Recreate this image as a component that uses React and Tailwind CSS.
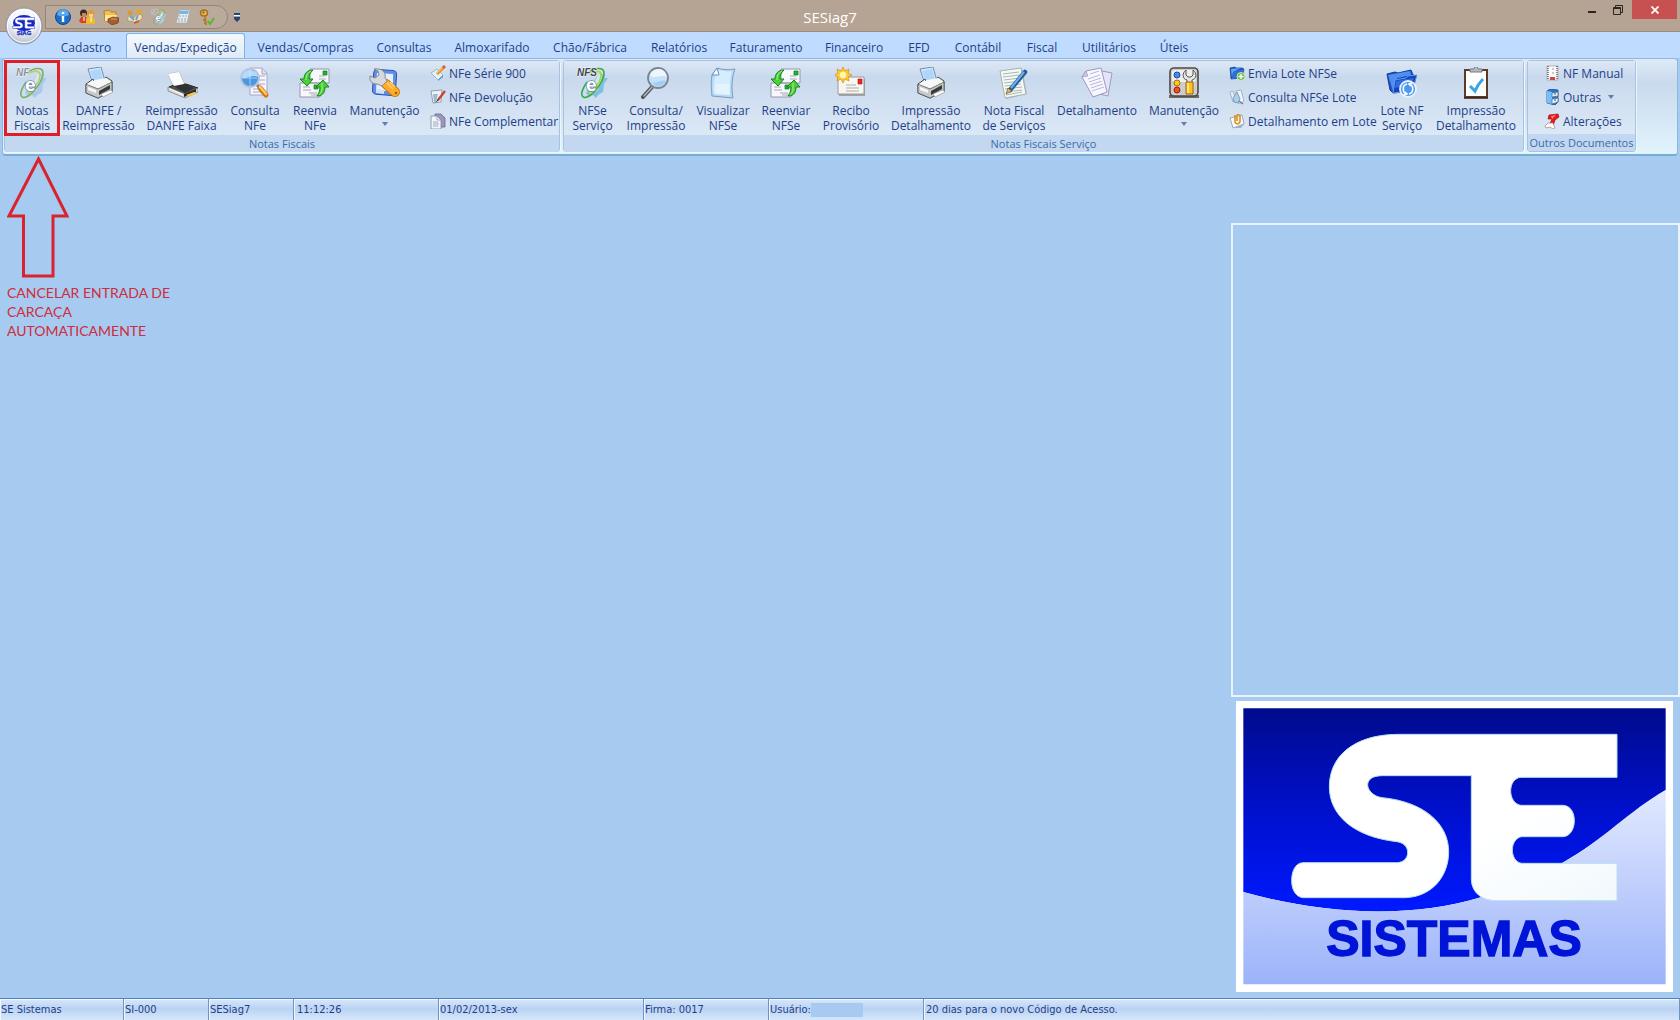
import React, { useState } from "react";

const tabs = [
  { name: "Cadastro", width: "w-20" },
  { name: "Vendas/Expedição", width: "w-[119px]" },
  { name: "Vendas/Compras", width: "w-[121px]" },
  { name: "Consultas", width: "w-[76px]" },
  { name: "Almoxarifado", width: "w-[100px]" },
  { name: "Chão/Fábrica", width: "w-24" },
  { name: "Relatórios", width: "w-[82px]" },
  { name: "Faturamento", width: "w-[92px]" },
  { name: "Financeiro", width: "w-[84px]" },
  { name: "EFD", width: "w-[46px]" },
  { name: "Contábil", width: "w-[72px]" },
  { name: "Fiscal", width: "w-14" },
  { name: "Utilitários", width: "w-[78px]" },
  { name: "Úteis", width: "w-[52px]" },
];

const SE_MARK =
  "M1191 133H530C400 135 328 200 328 290C328 375 400 440 530 455C550 457 563 470 563 487C563 505 550 518 530 518H248C225 520 215 545 215 572C215 600 228 620 248 623H555C640 620 686 555 686 485C686 400 610 335 487 323C460 320 443 300 443 285C443 268 458 257 487 257H754V570C756 608 785 632 830 632H1191V520H905C888 518 877 500 877 480C877 460 888 442 905 440H1030C1052 438 1063 415 1063 392C1063 368 1052 348 1030 346H903C885 344 872 325 872 303C872 280 885 263 903 262H1191Z";

/* ---------- large icons (32x32) ---------- */

const Svg = ({ children, size = 32, className = "size-8" }) => (
  <svg viewBox={`0 0 ${size} ${size}`} className={className} aria-hidden="true">
    {children}
  </svg>
);

const NfeIcon = ({ label = "NF", dark = false, className }) => (
  <Svg className={className}>
    <path d="M22 6l6 2-1 3 4 0-4 6-1 8-5 3-2 3-3-3-4 2-3-4 6-9z" fill={dark ? "#7fc0e0" : "#a9c9ec"} />
    <path d="M22 6l3 3-1 5-3 9-6 4-3-1z" fill={dark ? "#c9eaf0" : "#d8e8f7"} />
    <path d="M11 6C18 0 27 0 27 6c0 7-8 19-15 23-5 3-8 1-7-4 1-4 3-7 5-10" fill="none" stroke={dark ? "#35ad4c" : "#79b070"} strokeWidth="1.6" />
    <path d="M12 7c5-4 12-4 12 1 0 6-6 15-12 19" fill="none" stroke={dark ? "#b5d52f" : "#b9d061"} strokeWidth="1.6" />
    <text x="9" y="24" fontSize="19" fontWeight="700" fontFamily="Liberation Sans, sans-serif" fill="#fff" stroke="#6a8aa2" strokeWidth="1.5" paintOrder="stroke">e</text>
    <text x="0" y="9" fontSize="10" fontWeight="700" fontFamily="Liberation Sans, sans-serif" fontStyle="italic" fill={dark ? "#3f474c" : "#8a949c"} stroke="#f4f7fa" strokeWidth="1" paintOrder="stroke">{label}</text>
  </Svg>
);

const PrinterIcon = () => (
  <Svg>
    <path d="M5 2l13-2 4 14-12 3z" fill="#d4eafd" stroke="#6e8fb7" />
    <path d="M7 4l10-2 3 10-9 3z" fill="#9fccf5" opacity=".7" />
    <path d="M3 17l7-5 1 3 11-3 1-2 6 4v10l-14 7-12-5z" fill="#e8e9ea" stroke="#4a4a4a" />
    <path d="M3 17l12 5 14-7v9l-14 7-12-5z" fill="#c6c8c9" stroke="#555" strokeWidth=".8" />
    <path d="M4 17l8-4 11-2 5 4-13 6z" fill="#f7f7f7" />
    <path d="M16 24l11-6v4l-11 6z" fill="#37393b" />
    <path d="M18 27l10-4 2 2-10 5z" fill="#fff" stroke="#888" strokeWidth=".6" />
    <path d="M5 20l8 3v3l-8-3z" fill="#f5f5f5" />
    <circle cx="25" cy="17" r="1" fill="#8ac44a" />
  </Svg>
);

const FlatPrinterIcon = () => (
  <Svg>
    <path d="M2 7l11-2 6 13-11 3z" fill="#fff" stroke="#b8babd" />
    <path d="M3 20l5-2 12-1 12 4-13 7z" fill="#4c4e50" stroke="#252525" />
    <path d="M8 19l11-2 9 4-9 5z" fill="#2f3133" />
    <path d="M2 7l11-2 5 12-10 2z" fill="#fbfcfd" />
    <path d="M2 20l17 7 13-6v4l-13 6-17-7z" fill="#d4d4d3" stroke="#777" strokeWidth=".7" />
    <path d="M18 27l12-5v3l-12 5z" fill="#28292a" />
    <path d="M20 28l8-3 3 1-8 4z" fill="#f4c552" />
    <path d="M3 21l14 6v2l-14-7z" fill="#f6f6f5" />
  </Svg>
);

const SearchDocIcon = () => (
  <Svg>
    <path d="M11 1h12l5 5v22H11z" fill="#f5f5fb" stroke="#a5a6c6" />
    <path d="M23 1v6h5" fill="#dedff0" stroke="#a5a6c6" />
    <path d="M20 9h6M20 13h6M19 17h7M14 22h7M14 25h8" stroke="#a5a7cb" />
    <circle cx="11" cy="11" r="9" fill="#4b98e0" stroke="#b6c5db" strokeWidth="2" />
    <path d="M3 11c0-6 4-8 8-8 4 0 8 3 8 7-6-3-10 2-16 1z" fill="#b4d9fa" />
    <path d="M11 3v16M4 11h14" stroke="#dceeff" strokeWidth=".6" />
    <path d="M18 18l3 3" stroke="#7c8494" strokeWidth="3" />
    <path d="M21 21l6 7" stroke="#cf7418" strokeWidth="5" strokeLinecap="round" />
    <path d="M21 20l6 7" stroke="#ffcc61" strokeWidth="2.5" strokeLinecap="round" />
  </Svg>
);

const ResendIcon = () => (
  <Svg>
    <path d="M11 2h19v14H11zM1 16h20v14H1z" fill="#f7f7fc" stroke="#9796b0" />
    <path d="M24 4h4v4h-4zM15 18h4v4h-4z" fill="#15bd21" stroke="#0c7920" strokeWidth=".7" />
    <path d="M20 9h6M20 12h7M4 20h7M4 23h8M10 26h8M12 28h6" stroke="#a7a6bd" />
    <path d="M14 3C8 3 5 7 5 12H1l7 7 6-7h-4c0-4 1-6 4-9z" fill="#49d13a" stroke="#18851b" />
    <path d="M12 4c-4 2-5 5-5 9" stroke="#a9f08f" fill="none" />
    <path d="M18 29c6 0 8-4 8-9h4l-6-7-7 7h4c0 4-1 6-3 9z" fill="#49d13a" stroke="#18851b" />
    <path d="M23 16v7c-1 3-2 4-3 5" stroke="#a9f08f" fill="none" />
  </Svg>
);

const ToolsIcon = () => (
  <Svg>
    <rect x="4" y="3" width="23" height="25" rx="4" transform="rotate(4 17 16)" fill="#5f8fe6" stroke="#2c52ae" />
    <path d="M8 6l16 1 0 17-17 0z" fill="#e6effb" />
    <path d="M7 22l8 1v4l-8-1z" fill="#cfdff8" />
    <path d="M17 17l9 8" stroke="#c57710" strokeWidth="10" strokeLinecap="round" />
    <path d="M17 17l9 8" stroke="#ffac24" strokeWidth="8" strokeLinecap="round" />
    <path d="M5 2l4 2 1 4-4 3-5-2c-1 5 2 8 7 8l5 2 5-5-2-4c1-5-3-9-11-8z" fill="#d5d8dd" stroke="#868b94" />
    <path d="M18 16l6 6M21 15l5 5" stroke="#ffd57c" strokeWidth="1.4" />
    <circle cx="27" cy="26" r="1.3" fill="#a85f0a" />
  </Svg>
);

const MagnifierIcon = () => (
  <Svg>
    <path d="M12 20L3 30" stroke="#4f5256" strokeWidth="4" strokeLinecap="round" />
    <path d="M12 20l-8 9" stroke="#b4b8bc" strokeWidth="1.5" strokeLinecap="round" />
    <circle cx="18" cy="11" r="10" fill="#c7e1fa" stroke="#7d8690" strokeWidth="1.8" />
    <path d="M10 9c1-5 5-7 9-7s7 3 8 8c-7-3-10 2-17-1z" fill="#ecf6ff" />
    <path d="M12 15c5 2 9-3 14-1-2 5-11 8-14 1z" fill="#a3cdf7" />
  </Svg>
);

const PageIcon = () => (
  <Svg>
    <path d="M10 1c6 2 12 2 18 1-3 8-4 18-2 29L5 29C4 20 4 13 5 8z" fill="#b5daf8" stroke="#7f9bc0" />
    <path d="M12 3c4 1 9 2 13 1-2 8-3 16-2 24L7 27c-1-7 0-12 1-17z" fill="#d6edfd" />
    <path d="M9 17h14l0 11-15-1z" fill="#eaf6ff" opacity=".7" />
    <path d="M10 1l2 7-7 0z" fill="#f4faff" stroke="#6c8fbe" />
  </Svg>
);

const ReceiptIcon = () => (
  <Svg>
    <path d="M4 12h26v17H4z" fill="#7b7b7b" opacity=".6" />
    <path d="M3 10h26v17H3z" fill="#f8f6f2" stroke="#9d9a94" />
    <path d="M23 12h4v5h-4z" fill="#e8252b" stroke="#a61619" strokeWidth=".6" />
    <path d="M11 18h10M11 21h13M11 24h13" stroke="#b0aca5" />
    <path d="M8 0l2 4 4-2-1 4 4 2-4 2 1 4-4-2-2 4-2-4-4 2 1-4-4-2 4-2-1-4 4 2z" fill="#ffcb2e" stroke="#d98a12" strokeWidth=".7" />
    <circle cx="8" cy="8" r="3.2" fill="#fff8b5" />
  </Svg>
);

const NotePenIcon = () => (
  <Svg>
    <path d="M3 5l21-4 5 26-21 5z" fill="#8e9491" opacity=".5" />
    <path d="M2 4l21-3 5 26-21 4z" fill="#f6f8f3" stroke="#a9b1b1" />
    <path d="M5 7l16-2M5 10l17-2M6 13l16-2M6 16l17-2M7 19l16-2M7 22l17-2M8 25l16-2M8 28l16-3" stroke="#a3b8b9" />
    <path d="M27 5L12 23" stroke="#265a9c" strokeWidth="4.5" strokeLinecap="round" />
    <path d="M26 5L13 21" stroke="#6fb2ec" strokeWidth="2" />
    <path d="M10 21l4 3-6 3z" fill="#f0b352" stroke="#5c4524" strokeWidth=".6" />
  </Svg>
);

const PapersIcon = () => (
  <Svg>
    <path d="M16 3l15 3-4 23-13-3z" fill="#e5e4f6" stroke="#9e9dc0" />
    <path d="M1 10l4-6 15-3 6 24-14 5z" fill="#f8f7ff" stroke="#9a99bd" />
    <path d="M1 10l6-1-2-5z" fill="#cac8e8" stroke="#9a99bd" strokeWidth=".7" />
    <path d="M9 7l9-3M7 12l12-4M8 15l12-4M9 18l12-4M10 21l12-4M11 24l12-4" stroke="#b9b7d8" />
  </Svg>
);

const PanelIcon = () => (
  <Svg>
    <path d="M1 28h30v3H1z" fill="#6c6864" />
    <rect x="2" y="1" width="28" height="28" rx="4" fill="#cfcdca" stroke="#4d4a47" strokeWidth="1.6" />
    <rect x="4" y="3" width="24" height="12" rx="3" fill="#efeeec" />
    <circle cx="9" cy="8" r="3" fill="#3f8cee" stroke="#1c4d9d" />
    <circle cx="9" cy="16" r="3" fill="#ffc61e" stroke="#a56e10" />
    <circle cx="9" cy="23" r="3" fill="#f04d22" stroke="#991d11" />
    <path d="M18 3c-4 3-4 9 1 10v3h5v-3c5-1 5-7 1-10v5l-2 2h-3l-2-2z" fill="#e3e5e7" stroke="#515457" />
    <path d="M18 15h7v12h-7z" fill="#ffc11e" stroke="#a26510" />
    <path d="M20 16v10" stroke="#fff0a0" strokeWidth="1.5" />
  </Svg>
);

const FolderSyncIcon = () => (
  <Svg>
    <path d="M1 7l8-2 3 1 13-3 2 5 3 1-3 15-20 2-3-3z" fill="#1c52c4" stroke="#123a93" />
    <path d="M2 8l22-4 1 4-14 3-4 13z" fill="#4f8ff0" />
    <path d="M9 13l11-2 2-2 9-1-5 16-19 2z" fill="#1743b4" stroke="#5f9bf0" />
    <path d="M10 14l11-2 7-1-3 6-16 4z" fill="#2f6ddf" />
    <circle cx="22" cy="22" r="8" fill="#4c9af0" stroke="#e8f2fc" strokeWidth="1.8" />
    <path d="M21 17c-5 1-5 9 0 10M19 25l2 2-3 1M23 27c5-1 5-9 0-10M25 19l-2-2 3-1" fill="none" stroke="#fff" strokeWidth="1.6" />
  </Svg>
);

const ClipboardIcon = () => (
  <Svg>
    <path d="M5 3h22v27H5z" fill="#fff" stroke="#5d3c25" strokeWidth="2" />
    <path d="M4 31h24" stroke="#342114" strokeWidth="1.5" />
    <path d="M10 5V2h4c0-3 4-3 4 0h4v3z" fill="#b7bbbe" stroke="#76797c" />
    <path d="M10 19l5 5c2-5 4-8 8-12" fill="none" stroke="#3aa5e2" strokeWidth="3" />
  </Svg>
);

/* ---------- small icons (16x16) ---------- */

const Small = ({ children }) => (
  <Svg size={16} className="size-4 shrink-0">
    {children}
  </Svg>
);

const SheetPencil = () => (
  <Small>
    <path d="M1 8l6-4 6 6-5 5z" fill="#e3f0fd" stroke="#88a9cf" strokeWidth=".8" />
    <path d="M8 15l5-5v2l-5 4z" fill="#668dc0" />
    <path d="M14 2L7 9" stroke="#e69821" strokeWidth="3" />
    <path d="M13 2L7 8" stroke="#ffd35b" />
    <path d="M15 1l-2 2" stroke="#d75f45" strokeWidth="3" />
  </Small>
);

const SheetBrush = () => (
  <Small>
    <path d="M1 2l11-1-1 12-8 1z" fill="#edf2f8" stroke="#7c8da3" strokeWidth=".8" />
    <path d="M3 5l5 0-2 8H4z" fill="#9fb9d7" />
    <path d="M15 2L8 11" stroke="#c7402a" strokeWidth="2.2" />
    <path d="M8 10l1 1-4 3z" fill="#332b2c" />
  </Small>
);

const CopyDocs = () => (
  <Small>
    <path d="M5 1h6l4 4v9H5z" fill="#9f95bb" stroke="#6d6691" strokeWidth=".8" />
    <path d="M1 3h6l4 4v9H1z" fill="#f0f4fb" stroke="#7f8ba3" strokeWidth=".8" />
    <path d="M7 3v4h4M3 9h5M3 11h6M3 13h5" fill="none" stroke="#8b9bb7" strokeWidth=".8" />
  </Small>
);

const FolderPlus = () => (
  <Small>
    <path d="M1 3l5-1 1 1h6l2 1-2 9-11 1z" fill="#1e56bd" stroke="#173e91" strokeWidth=".7" />
    <path d="M2 4l10-1-8 4-1 6z" fill="#65a5f1" />
    <path d="M4 7l11-3-2 9-10 1z" fill="#2f6ed8" />
    <circle cx="12" cy="11.5" r="4" fill="#6dbb48" stroke="#e3f4d9" strokeWidth=".8" />
    <path d="M12 9v5M9.500 11.500h5" stroke="#fff" strokeWidth="1.4" />
  </Small>
);

const SheetLens = () => (
  <Small>
    <path d="M1 3l3-1 3 10-3 1z" fill="#e9f0f9" stroke="#8a9db6" strokeWidth=".7" />
    <path d="M7 2l5-1 3 11-5 3z" fill="#edf4fc" stroke="#8a9db6" strokeWidth=".7" />
    <path d="M8 3l3 7-2 4-4-1-1-4z" fill="#a5d0f0" stroke="#738ba9" strokeWidth=".8" />
    <path d="M10 12l4 3" stroke="#647f9d" strokeWidth="1.5" />
  </Small>
);

const SheetClip = () => (
  <Small>
    <path d="M1 5l12-3 2 9-11 4z" fill="#f8fafd" stroke="#8695aa" strokeWidth=".8" />
    <path d="M4 15l11-4-3 4z" fill="#a1b0c4" />
    <path d="M6 2v7c1 3 5 2 5-1V3c-1-2-3-2-3 0v5" fill="none" stroke="#dc9424" strokeWidth="1.7" />
  </Small>
);

const Ledger = () => (
  <Small>
    <path d="M3 1h11v14H3z" fill="#fafafa" stroke="#a3a3a3" strokeWidth=".8" />
    <path d="M4 1v14M13 1v14" stroke="#666" strokeWidth="1.5" strokeDasharray="1 1" />
    <path d="M8 4h2M8 8h2" stroke="#999" />
    <path d="M6 12h5v3H6z" fill="#c84a48" />
  </Small>
);

const Cabinet = () => (
  <Small>
    <path d="M3 2l3-2 8 1v12l-3 3-8-2z" fill="#2775cf" stroke="#174c94" strokeWidth=".8" />
    <path d="M3 2l5 1v12l-5-1z" fill="#77bff8" />
    <path d="M8 4l6-1v4l-6 1zM8 10l6-1v4l-6 2z" fill="#e9f0f8" stroke="#45698f" strokeWidth=".7" />
    <path d="M10 5h2M10 11h2" stroke="#35608e" />
  </Small>
);

const RedScroll = () => (
  <Small>
    <path d="M5 2l9-1 1 3-4 3-2 6-4 0 3-7H4z" fill="#e71a1b" stroke="#a80e12" strokeWidth=".7" />
    <path d="M7 3l5-1-4 4z" fill="#ff8a7b" />
    <path d="M1 13l3-3h5l2 5-2 1-3-2-4 1z" fill="#fff" stroke="#af7777" strokeWidth=".7" />
  </Small>
);

const InfoIcon = () => (
  <Small>
    <circle cx="8" cy="8" r="7.5" fill="#1b6fc7" stroke="#0f458f" />
    <path d="M2 6a6 6 0 0 1 12 0c-4 2-8 2-12 0z" fill="#57a8ee" />
    <path d="M8 3v2M8 7v6" stroke="#fff" strokeWidth="2.4" />
  </Small>
);

const UsersIcon = () => (
  <Small>
    <path d="M0 12l2-4h5l1 2v4l-6 0z" fill="#d8401f" />
    <path d="M7 15l0-5 2-2h5l2 3v4z" fill="#eebb2d" />
    <circle cx="4.5" cy="4" r="3.5" fill="#3c2a20" />
    <path d="M3 4h4v3l-2 1-2-1z" fill="#c98654" />
    <circle cx="12" cy="4.5" r="3.5" fill="#e39a35" />
    <path d="M10 5h4v2l-2 2-2-2z" fill="#f8d2a0" />
    <path d="M5 8v4M12 9v4" stroke="#fff" />
  </Small>
);

const FolderHand = () => (
  <Small>
    <path d="M1 2l5-1 2 2h5v9H2z" fill="#f3c14b" stroke="#ac771d" strokeWidth=".8" />
    <path d="M2 6h12l-2 6H2z" fill="#ffe598" />
    <path d="M5 10l5-2 6 1-1 5-6 2-4-3z" fill="#a4602c" stroke="#6f3c18" strokeWidth=".7" />
    <path d="M8 10h6" stroke="#dc9c64" />
  </Small>
);

const PeopleFlow = () => (
  <Small>
    <circle cx="3" cy="4" r="2.5" fill="#d69943" />
    <circle cx="12" cy="3" r="3" fill="#e1a53f" />
    <path d="M1 12V8l3-2 3 3 3-4 5 1v4l-4 2-2 3-4-3z" fill="#efe2b9" stroke="#b08c4c" strokeWidth=".6" />
    <path d="M3 7l4 4M11 6l-2 5" stroke="#5fa3da" strokeWidth="2" />
    <path d="M7 14l5-2" stroke="#da5b38" strokeWidth="2" />
  </Small>
);

const CalculatorIcon = () => (
  <Small>
    <path d="M5 1h10l-3 13H1z" fill="#e6ecef" stroke="#a1adb5" strokeWidth=".8" />
    <path d="M5 2h9l-1 3H4z" fill="#79b6e2" />
    <path d="M4 7h8M3 10h9M3 12h8" stroke="#b3c0c8" strokeWidth="1.4" strokeDasharray="2 1" />
  </Small>
);

const KeyIcon = () => (
  <Small>
    <ellipse cx="5" cy="4" rx="3.5" ry="3" fill="#e3b557" stroke="#a86f1b" strokeWidth="1.5" />
    <circle cx="4.5" cy="3.5" r="1" fill="#7a5321" />
    <path d="M6 7l1 9M7 11h-3M7 14h-2" stroke="#b57c22" strokeWidth="2" />
    <path d="M9 12l2 3 4-6" fill="none" stroke="#59b42e" strokeWidth="1.8" />
  </Small>
);

/* ---------- ribbon pieces ---------- */

const Caret = () => (
  <svg viewBox="0 0 6 4" className="h-1 w-1.5" aria-hidden="true">
    <path d="M0 0h6L3 4z" fill="#5b7fae" />
  </svg>
);

const BigButton = ({ icon, lines, width, menu, marked }) => (
  <button type="button" className={`relative flex h-[74px] shrink-0 flex-col items-center pt-1.5 ${width}`}>
    {icon}
    <span className="mt-1 flex flex-col items-center whitespace-nowrap text-[12px] leading-[15px]">
      {lines.map((line) => (
        <span key={line}>{line}</span>
      ))}
    </span>
    {menu && (
      <span className="mt-1">
        <Caret />
      </span>
    )}
    {marked && <span className="absolute -inset-px border-3 border-[#de1f2b]" />}
  </button>
);

const SmallButton = ({ icon, text, menu }) => (
  <button type="button" className="flex h-6 items-center gap-[3px] whitespace-nowrap text-[12px] leading-[15px]">
    {icon}
    <span>{text}</span>
    {menu && (
      <span className="ml-1">
        <Caret />
      </span>
    )}
  </button>
);

const Group = ({ title, width, children }) => (
  <section className={`flex shrink-0 flex-col rounded-[3px] border border-[#a9c2df] shadow-[1px_1px_0_#edf6fd] ${width}`}>
    <div className="flex h-[74px] bg-linear-to-b from-[#dde8f5] via-[#c9d9ed] via-22% to-[#dbe8f6]">{children}</div>
    <h2 className="flex h-[17px] justify-center rounded-b-[2px] bg-[#c1d8f0] text-[11px] leading-[18px] whitespace-nowrap text-[#3e6aaa]">
      {title}
    </h2>
  </section>
);

const SeSistemasLogo = () => (
  <svg viewBox="48 33 1311 873" className="w-full" role="img" aria-label="SE Sistemas">
    <defs>
      <linearGradient id="skyDark" x1="0" y1="0" x2="0" y2="1">
        <stop offset="0" stopColor="#000b8c" />
        <stop offset="0.5" stopColor="#0010cc" />
        <stop offset="1" stopColor="#0019ff" />
      </linearGradient>
      <linearGradient id="skyLight" x1="0" y1="0" x2="0" y2="1">
        <stop offset="0" stopColor="#e2e9fe" />
        <stop offset="1" stopColor="#9cb3f9" />
      </linearGradient>
      <linearGradient id="markFill" x1="0" y1="0" x2="1" y2="1">
        <stop offset="0.6" stopColor="#ffffff" />
        <stop offset="1" stopColor="#f1f9fd" />
      </linearGradient>
    </defs>
    <rect x="48" y="33" width="1311" height="873" fill="#fff" />
    <path d="M70 55H1337V300C1230 370 1150 450 1028 518L785 621C560 690 300 670 70 606Z" fill="url(#skyDark)" />
    <path d="M70 606C300 670 560 690 785 621L1028 518C1150 450 1230 360 1337 300V883H70Z" fill="url(#skyLight)" />
    <path d={SE_MARK} fill="url(#markFill)" stroke="#b9def2" strokeWidth="3" />
    <text x="702" y="799" textAnchor="middle" fontFamily="Liberation Sans, Arial, sans-serif" fontWeight="700" fontSize="150" fill="#0014d8" stroke="#0014d8" strokeWidth="4">
      SISTEMAS
    </text>
  </svg>
);

const TitleBar = () => (
  <header className="relative flex h-8 items-start justify-between border-b border-[#9c8b7e] bg-[#b5a493]">
    <div className="flex items-center pt-[5px] pl-[45px]">
      <div className="flex h-6 w-[183px] items-center gap-2 rounded-r-full border border-[#93857a] bg-[#b9aa9b] pl-[9px]">
        <button type="button" aria-label="Informações"><InfoIcon /></button>
        <button type="button" aria-label="Usuários"><UsersIcon /></button>
        <button type="button" aria-label="Pastas"><FolderHand /></button>
        <button type="button" aria-label="Clientes"><PeopleFlow /></button>
        <button type="button" aria-label="NFe"><NfeIcon className="size-4" /></button>
        <button type="button" aria-label="Calculadora"><CalculatorIcon /></button>
        <button type="button" aria-label="Senha"><KeyIcon /></button>
      </div>
      <button type="button" aria-label="Personalizar" className="ml-1.5">
        <svg viewBox="0 0 6 9" className="h-[9px] w-1.5">
          <path d="M0 0h6v2H0zM0 4h6v2L3 9 0 6z" fill="#26447c" />
          <path d="M0 2h6v1H0z" fill="#fff" />
        </svg>
      </button>
    </div>

    <h1 className="absolute inset-x-0 top-[7px] mr-5 text-center text-[15px] leading-5 text-white">SESiag7</h1>

    <div className="relative mr-[3px] flex h-[19px]">
      <button type="button" aria-label="Minimizar" className="flex w-6 items-center justify-center">
        <span className="mt-1 h-0.5 w-2 bg-[#2b241f]" />
      </button>
      <button type="button" aria-label="Restaurar" className="flex w-7 items-center justify-center">
        <svg viewBox="0 0 10 10" className="size-2.5" fill="none" stroke="#2b241f">
          <path d="M2.500 2V.5h7v7H8" />
          <path d="M.5 2.500h7v7h-7zM.5 3.500h7" />
        </svg>
      </button>
      <button type="button" aria-label="Fechar" className="flex w-[45px] items-center justify-center bg-[#c75050]">
        <svg viewBox="0 0 8 8" className="size-2" stroke="#fff" strokeWidth="1.8">
          <path d="M.5.5l7 7M7.500.5l-7 7" />
        </svg>
      </button>
    </div>

    <button type="button" aria-label="Menu SESiag" className="absolute top-[7px] left-[5px] z-10">
      <svg viewBox="0 0 38 38" className="size-[38px]">
        <defs>
          <radialGradient id="orb" cx="0.5" cy="0.3" r="0.7">
            <stop offset="0.5" stopColor="#f6f8fb" />
            <stop offset="1" stopColor="#b3bdcb" />
          </radialGradient>
        </defs>
        <circle cx="19" cy="19" r="18" fill="url(#orb)" stroke="#8b93a0" />
        <circle cx="19" cy="19" r="16.5" fill="none" stroke="#fff" />
        <ellipse cx="19" cy="16" rx="11" ry="8" fill="#1428c8" />
        <svg x="7" y="10" width="23" height="12" viewBox="205 120 1000 525" preserveAspectRatio="none">
          <path d={SE_MARK} fill="#fff" stroke="#1428c8" strokeWidth="24" />
        </svg>
        <text x="19" y="28" textAnchor="middle" fontSize="6" fontWeight="700" fontFamily="Liberation Sans, sans-serif" fill="#1428b8" stroke="#1428b8" strokeWidth=".3">SIAG</text>
      </svg>
    </button>
  </header>
);

const Annotation = () => (
  <div className="w-[180px] pl-[7px]">
    <svg viewBox="0 0 62 122" className="h-[122px] w-[62px]" fill="none" stroke="#d9232e" strokeWidth="3">
      <path d="M31.500 3L60 60H46v60H16.500V60H2z" />
    </svg>
    <p className="mt-[5px] font-[Lato,sans-serif] text-[14px] leading-[19px] text-[#d02c3c]">
      CANCELAR ENTRADA DE CARCAÇA AUTOMATICAMENTE
    </p>
  </div>
);

const StatusCell = ({ width, children }) => (
  <div className={`flex items-center border-r border-[#6f93c4] pl-px whitespace-nowrap shadow-[inset_1px_1px_0_#eef6ff] ${width}`}>
    {children}
  </div>
);

const App = () => {
  const [activeTab, setActiveTab] = useState("Vendas/Expedição");

  return (
    <div className="flex min-h-screen flex-col overflow-hidden bg-[#a6caf0] font-['Open_Sans','Noto_Sans',sans-serif] text-[#1e3f87]">
      <TitleBar />

      <nav className="flex h-[26px] items-end bg-[#bfdbff] pl-[46px]">
        {tabs.map((tab) => (
          <button
            key={tab.name}
            type="button"
            onClick={() => setActiveTab(tab.name)}
            className={`h-[25px] shrink-0 rounded-t-[3px] border border-b-0 pt-[3px] text-center text-[12px] leading-5 whitespace-nowrap ${tab.width} ${
              activeTab === tab.name
                ? "border-[#7fb2e0] bg-linear-to-b from-[#f4f9fe] to-[#dfeaf7]"
                : "border-transparent"
            }`}
          >
            {tab.name}
          </button>
        ))}
      </nav>

      <div className="mx-0.5 flex h-[98px] gap-[3px] rounded-[4px] border border-b-2 border-[#8db6e0] border-b-[#78acd4] bg-linear-to-b from-[#dfeaf6] via-[#cadaed] via-25% to-[#e0f4fd] pt-px pb-0.5 pl-px">
        <Group title="Notas Fiscais" width="w-[556px]">
          <BigButton icon={<NfeIcon />} lines={["Notas", "Fiscais"]} width="w-[54px]" marked />
          <BigButton icon={<PrinterIcon />} lines={["DANFE /", "Reimpressão"]} width="w-[79px]" />
          <BigButton icon={<FlatPrinterIcon />} lines={["Reimpressão", "DANFE Faixa"]} width="w-[87px]" />
          <BigButton icon={<SearchDocIcon />} lines={["Consulta", "NFe"]} width="w-[60px]" />
          <BigButton icon={<ResendIcon />} lines={["Reenvia", "NFe"]} width="w-[60px]" />
          <BigButton icon={<ToolsIcon />} lines={["Manutenção"]} width="w-[79px]" menu />
          <div className="flex flex-col pl-1.5">
            <SmallButton icon={<SheetPencil />} text="NFe Série 900" />
            <SmallButton icon={<SheetBrush />} text="NFe Devolução" />
            <SmallButton icon={<CopyDocs />} text="NFe Complementar" />
          </div>
        </Group>

        <Group title="Notas Fiscais Serviço" width="w-[961px]">
          <BigButton icon={<NfeIcon label="NFS" dark />} lines={["NFSe", "Serviço"]} width="w-[57px]" />
          <BigButton icon={<MagnifierIcon />} lines={["Consulta/", "Impressão"]} width="w-[70px]" />
          <BigButton icon={<PageIcon />} lines={["Visualizar", "NFSe"]} width="w-16" />
          <BigButton icon={<ResendIcon />} lines={["Reenviar", "NFSe"]} width="w-[62px]" />
          <BigButton icon={<ReceiptIcon />} lines={["Recibo", "Provisório"]} width="w-[68px]" />
          <BigButton icon={<PrinterIcon />} lines={["Impressão", "Detalhamento"]} width="w-[92px]" />
          <BigButton icon={<NotePenIcon />} lines={["Nota Fiscal", "de Serviços"]} width="w-[74px]" />
          <BigButton icon={<PapersIcon />} lines={["Detalhamento"]} width="w-[92px]" />
          <BigButton icon={<PanelIcon />} lines={["Manutenção"]} width="w-[82px]" menu />
          <div className="flex w-[150px] shrink-0 flex-col pl-1">
            <SmallButton icon={<FolderPlus />} text="Envia Lote NFSe" />
            <SmallButton icon={<SheetLens />} text="Consulta NFSe Lote" />
            <SmallButton icon={<SheetClip />} text="Detalhamento em Lote" />
          </div>
          <BigButton icon={<FolderSyncIcon />} lines={["Lote NF", "Serviço"]} width="w-[54px]" />
          <BigButton icon={<ClipboardIcon />} lines={["Impressão", "Detalhamento"]} width="w-[94px]" />
        </Group>

        <Group title="Outros Documentos" width="w-[109px]">
          <div className="flex flex-col pl-4">
            <SmallButton icon={<Ledger />} text="NF Manual" />
            <SmallButton icon={<Cabinet />} text="Outras" menu />
            <SmallButton icon={<RedScroll />} text="Alterações" />
          </div>
        </Group>
      </div>

      <main className="flex flex-1 justify-between">
        <Annotation />
        <aside className="flex w-[449px] flex-col justify-end pb-1.5">
          <div className="h-[474px] border-2 border-[#e9f3fd]" />
          <div className="mt-1 mr-[7px] ml-[5px]">
            <SeSistemasLogo />
          </div>
        </aside>
      </main>

      <footer className="flex h-[22px] border-t border-[#5580b6] bg-linear-to-b from-[#d9e8fa] via-[#b9d3f3] via-45% to-[#d6e6fa] font-['DejaVu_Sans_Condensed','DejaVu_Sans',sans-serif] text-[11px] leading-4">
        <StatusCell width="w-[124px]">SE Sistemas</StatusCell>
        <StatusCell width="w-[85px]">SI-000</StatusCell>
        <StatusCell width="w-[85px]">SESiag7</StatusCell>
        <StatusCell width="w-[145px]"><span className="pl-0.5">11:12:26</span></StatusCell>
        <StatusCell width="w-[205px]">01/02/2013-sex</StatusCell>
        <StatusCell width="w-[125px]">Firma: 0017</StatusCell>
        <StatusCell width="w-[155px]">
          Usuário:
          <span className="h-3.5 w-[52px] bg-[#a6caf0]" />
        </StatusCell>
        <StatusCell width="flex-1">
          <span className="pl-px">20 dias para o novo Código de Acesso.</span>
        </StatusCell>
      </footer>
    </div>
  );
};

export default App;
